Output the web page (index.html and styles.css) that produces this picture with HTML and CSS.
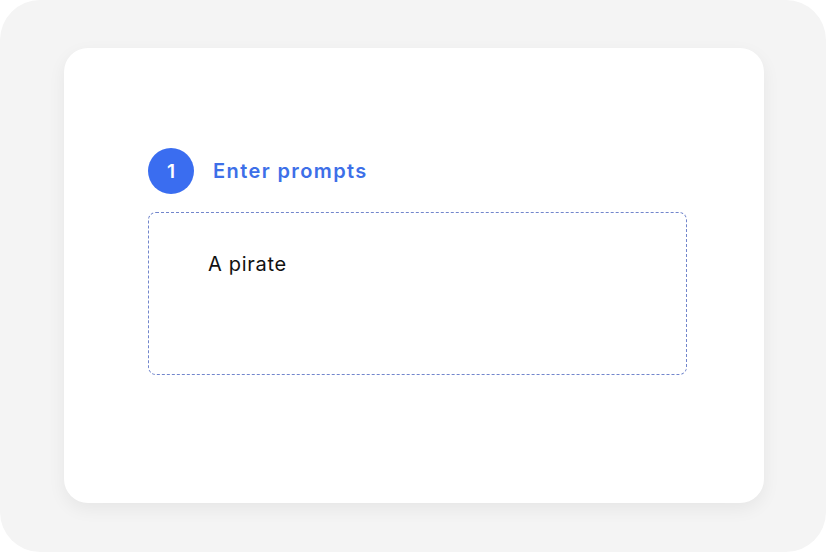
FILE: index.html
```html
<!DOCTYPE html>
<html>
<head>
    <title>Enter prompts</title>
    <meta charset="UTF-8">
    <link rel="stylesheet" href="styles.css">
</head>
<body>
    <div class="frame">
        <div class="card">
            <div class="step">
                <span class="step-num">1</span>
                <span class="step-title">Enter prompts</span>
            </div>
            <div class="prompt-box">
                <p class="prompt">A pirate</p>
            </div>
        </div>
    </div>
</body>
</html>
```

FILE: styles.css
```css
html, body {
    margin: 0;
    background: #ffffff;
}
.frame {
    width: 826px;
    height: 552px;
    box-sizing: border-box;
    background: #f4f4f4;
    border-radius: 40px;
    padding: 48px 62px 49px 64px;
}
.card {
    height: 100%;
    box-sizing: border-box;
    background: #fff;
    border-radius: 24px;
    box-shadow: 0 6px 18px rgba(0, 0, 0, 0.06);
    padding: 100px 77px 0 84px;
}
.step {
    display: flex;
    align-items: center;
    gap: 19px;
    height: 46px;
}
.step-num {
    width: 46px;
    height: 46px;
    border-radius: 50%;
    background: #3a6df0;
    color: #fff;
    display: flex;
    align-items: center;
    justify-content: center;
    font-family: Inter, "Open Sans", sans-serif;
    font-weight: 600;
    font-size: 19px;
}
.step-title {
    font-family: Inter, "Open Sans", sans-serif;
    font-weight: 600;
    font-size: 20px;
    color: #3d6fe8;
    letter-spacing: 1.4px;
}
.prompt-box {
    margin-top: 18px;
    width: 539px;
    height: 163px;
    box-sizing: border-box;
    border: 1px dashed #7286cc;
    border-radius: 8px;
    padding: 39px 59px;
}
.prompt {
    margin: 0;
    font-family: Inter, "Open Sans", sans-serif;
    font-size: 20px;
    line-height: 24px;
    color: #111;
    letter-spacing: 0.7px;
}
```
